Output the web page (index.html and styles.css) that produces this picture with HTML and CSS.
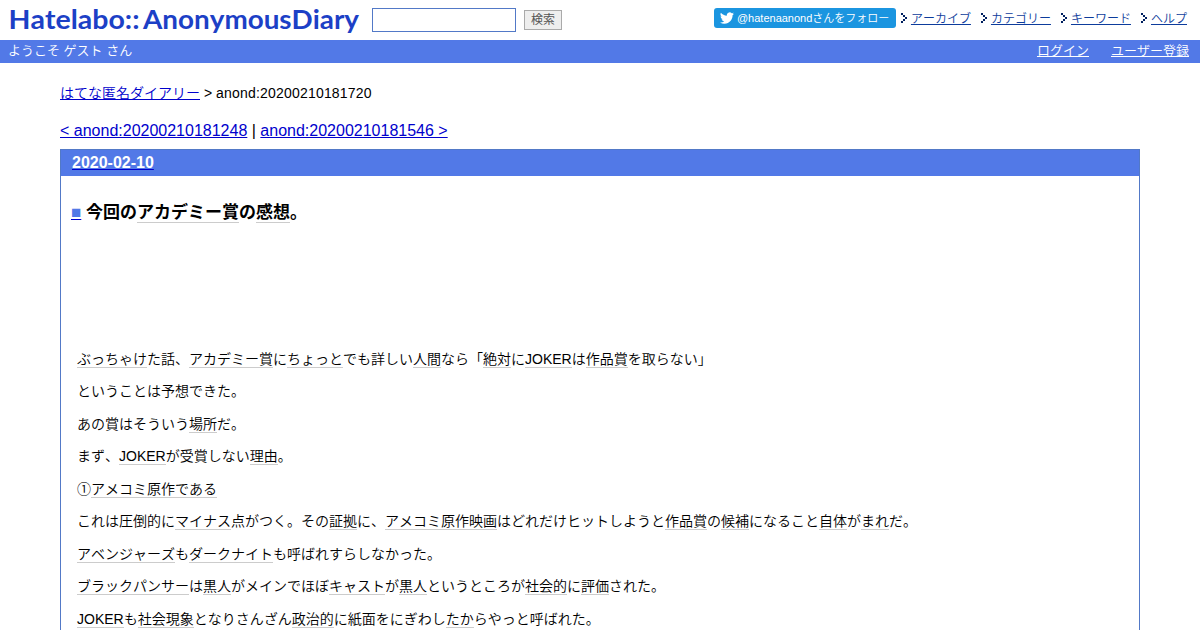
FILE: index.html
```html
<!DOCTYPE html>
<html lang="ja">
<head>
  <meta charset="UTF-8">
  <title>今回のアカデミー賞の感想。</title>
  <link rel="stylesheet" href="styles.css">
</head>
<body>

  <!-- header -->
  <div class="header">
    <a class="logo" href="#">
      <svg width="360" height="40" viewBox="0 0 360 40">
        <text x="8.5" y="28.5" textLength="131" lengthAdjust="spacingAndGlyphs">Hatelabo::</text>
        <text x="143" y="28.5" textLength="216" lengthAdjust="spacingAndGlyphs">AnonymousDiary</text>
      </svg>
    </a>
    <form class="search">
      <input type="text" class="search-word">
      <button type="button" class="search-button">検索</button>
    </form>
    <div class="header-right">
      <a class="follow" href="#">
        <svg width="14" height="14" viewBox="0 0 24 24"><path fill="#fff" d="M23.95 4.57a10 10 0 0 1-2.82.77 4.96 4.96 0 0 0 2.16-2.72c-.95.55-2 .95-3.12 1.18a4.92 4.92 0 0 0-8.39 4.48C7.69 8.1 4.07 6.13 1.64 3.16a4.92 4.92 0 0 0 1.52 6.57 4.9 4.9 0 0 1-2.23-.61v.06a4.92 4.92 0 0 0 3.95 4.83 5 5 0 0 1-2.21.08 4.94 4.94 0 0 0 4.6 3.42A9.87 9.87 0 0 1 0 19.54a13.99 13.99 0 0 0 7.55 2.21c9.05 0 14-7.5 14-13.98 0-.21 0-.42-.02-.63a9.94 9.94 0 0 0 2.46-2.55z"/></svg>
        <span>@hatenaanondさんをフォロー</span>
      </a>
      <ul class="menu">
        <li><a href="#">アーカイブ</a></li>
        <li><a href="#">カテゴリー</a></li>
        <li><a href="#">キーワード</a></li>
        <li><a href="#">ヘルプ</a></li>
      </ul>
    </div>
  </div>

  <div class="guide">
    <span>ようこそ ゲスト さん</span>
    <div class="guide-links">
      <a href="#">ログイン</a>
      <a href="#">ユーザー登録</a>
    </div>
  </div>

  <div class="hatena-body">
    <div class="breadcrumbs"><a href="#">はてな匿名ダイアリー</a> &gt; <span>anond:20200210181720</span></div>
    <div class="pager"><a href="#">&lt; anond:20200210181248</a> | <a href="#">anond:20200210181546 &gt;</a></div>

    <!-- entry -->
    <div class="day">
      <h2><a href="#">2020-02-10</a></h2>
      <div class="body">
        <h3><a class="sanchor" href="#">■</a><span>今回の<a class="keyword">アカデミー賞</a>の<a class="keyword">感想</a>。</span></h3>
        <div class="ad"></div>
        <div class="section">
          <p><a class="keyword">ぶっちゃけ</a>た話、<a class="keyword">アカデミー賞</a>に<a class="keyword">ちょっと</a>でも詳しい<a class="keyword">人間</a>なら「<a class="keyword">絶対</a>に<a class="keyword">JOKER</a>は<a class="keyword">作品賞</a>を取らない」</p>
          <p>ということは予想できた。</p>
          <p>あの賞はそういう<a class="keyword">場所</a>だ。</p>
          <p>まず、<a class="keyword">JOKER</a>が受賞しない<a class="keyword">理由</a>。</p>
          <p>①<a class="keyword">アメコミ</a><a class="keyword">原作</a><a class="keyword">である</a></p>
          <p>これは圧倒的に<a class="keyword">マイナス</a>点がつく。その<a class="keyword">証拠</a>に、<a class="keyword">アメコミ</a><a class="keyword">原作</a><a class="keyword">映画</a>はどれだけヒットしようと<a class="keyword">作品賞</a>の<a class="keyword">候補</a>になること<a class="keyword">自体</a>が<a class="keyword">まれ</a>だ。</p>
          <p><a class="keyword">アベンジャーズ</a>も<a class="keyword">ダークナイト</a>も呼ばれすらしなかった。</p>
          <p><a class="keyword">ブラックパンサー</a>は<a class="keyword">黒人</a>がメインでほぼ<a class="keyword">キャスト</a>が<a class="keyword">黒人</a>というところが<a class="keyword">社会的</a>に<a class="keyword">評価</a>された。</p>
          <p><a class="keyword">JOKER</a>も<a class="keyword">社会現象</a>となりさんざん<a class="keyword">政治的</a>に紙面をにぎわし<a class="keyword">たか</a>らやっと呼ばれた。</p>
        </div>
      </div>
    </div>
  </div>

</body>
</html>
```
FILE: styles.css
```css
* {
  box-sizing: border-box;
}

body {
  margin: 0;
  height: 630px;
  overflow: hidden;
  background: #fff;
  color: #000;
  font-family: "Liberation Sans", "Noto Sans CJK JP", sans-serif;
  font-weight: 350;
  font-kerning: none;
  text-spacing-trim: space-all;
}

/* header */
.header {
  display: flex;
  height: 40px;
}

.logo {
  width: 372px;
}

.logo text {
  font-family: Lato, sans-serif;
  font-size: 26px;
  font-weight: bold;
  fill: #1c40c6;
}

.search {
  display: flex;
  align-items: center;
  gap: 8px;
  height: 40px;
}

.search-word {
  width: 144px;
  height: 24px;
  border: 1px solid #5279c7;
  background: #fff;
}

.search-button {
  width: 38px;
  height: 20px;
  padding: 0;
  border: 1px solid #aaa;
  background: #eee;
  color: #555;
  font-family: inherit;
  font-size: 12px;
  line-height: 16px;
}

.header-right {
  display: flex;
  align-items: flex-start;
  margin-left: auto;
  padding: 8px 13px 0 0;
}

.follow {
  display: flex;
  align-items: center;
  gap: 3px;
  width: 182px;
  height: 20px;
  padding-left: 6px;
  margin-right: 5px;
  border-radius: 3px;
  background: #1b95e0;
  color: #fff;
  font-size: 11px;
  line-height: 20px;
  text-decoration: none;
  white-space: nowrap;
}

.menu {
  display: flex;
  gap: 10px;
  margin: 0;
  padding: 0;
  list-style: none;
  font-size: 12px;
  line-height: 22px;
}

.menu li {
  display: flex;
  align-items: center;
}

/* dotted arrow */
.menu li::before {
  content: "";
  width: 2px;
  height: 2px;
  margin: -10px 8px 0 0;
  background: #002060;
  box-shadow: 2px 2px #002060, 4px 4px #002060, 2px 6px #002060, 0 8px #002060;
}

.menu a {
  color: #0d3c9c;
}

.guide {
  display: flex;
  justify-content: space-between;
  height: 23px;
  padding: 0 11px 0 8px;
  background: #5279e7;
  color: #fff;
  font-size: 13px;
  line-height: 22px;
}

.guide-links {
  display: flex;
  gap: 22px;
}

.guide a {
  color: #fff;
}

/* main */
.hatena-body {
  margin: 0 60px;
  padding-top: 20px;
}

.hatena-body a[href] {
  color: #0000cc;
}

.breadcrumbs {
  height: 20px;
  font-size: 14px;
  line-height: 20px;
}

.breadcrumbs span {
  letter-spacing: 0.2px;
}

.pager {
  margin: 18px 0 8px;
  font-size: 16px;
  line-height: 20px;
}

.day {
  border: 1px solid #5279c7;
}

.day h2 {
  margin: 0;
  height: 26px;
  padding-left: 11px;
  background: #5279e7;
  font-size: 16px;
  line-height: 26px;
}

.day h2 a {
  display: inline-block;
  text-decoration: underline #0000cc;
}

.hatena-body h2 a[href] {
  color: #fff;
}

.body {
  padding: 0 10px;
}

.day h3 {
  display: flex;
  gap: 5px;
  margin: 25px 0 0;
  font-size: 17px;
  line-height: 24px;
}

.hatena-body .sanchor[href] {
  width: 10px;
  color: #5279e7;
  font-size: 17px;
  text-decoration: underline #0000cc;
}

.keyword {
  border-bottom: 1px solid #ccc;
  color: #000;
}

.ad {
  height: 124.6px;
}

.section {
  padding: 0 6px;
  font-size: 14px;
}

.section p {
  margin: 0 0 14px;
  line-height: 18.5px;
}
```
